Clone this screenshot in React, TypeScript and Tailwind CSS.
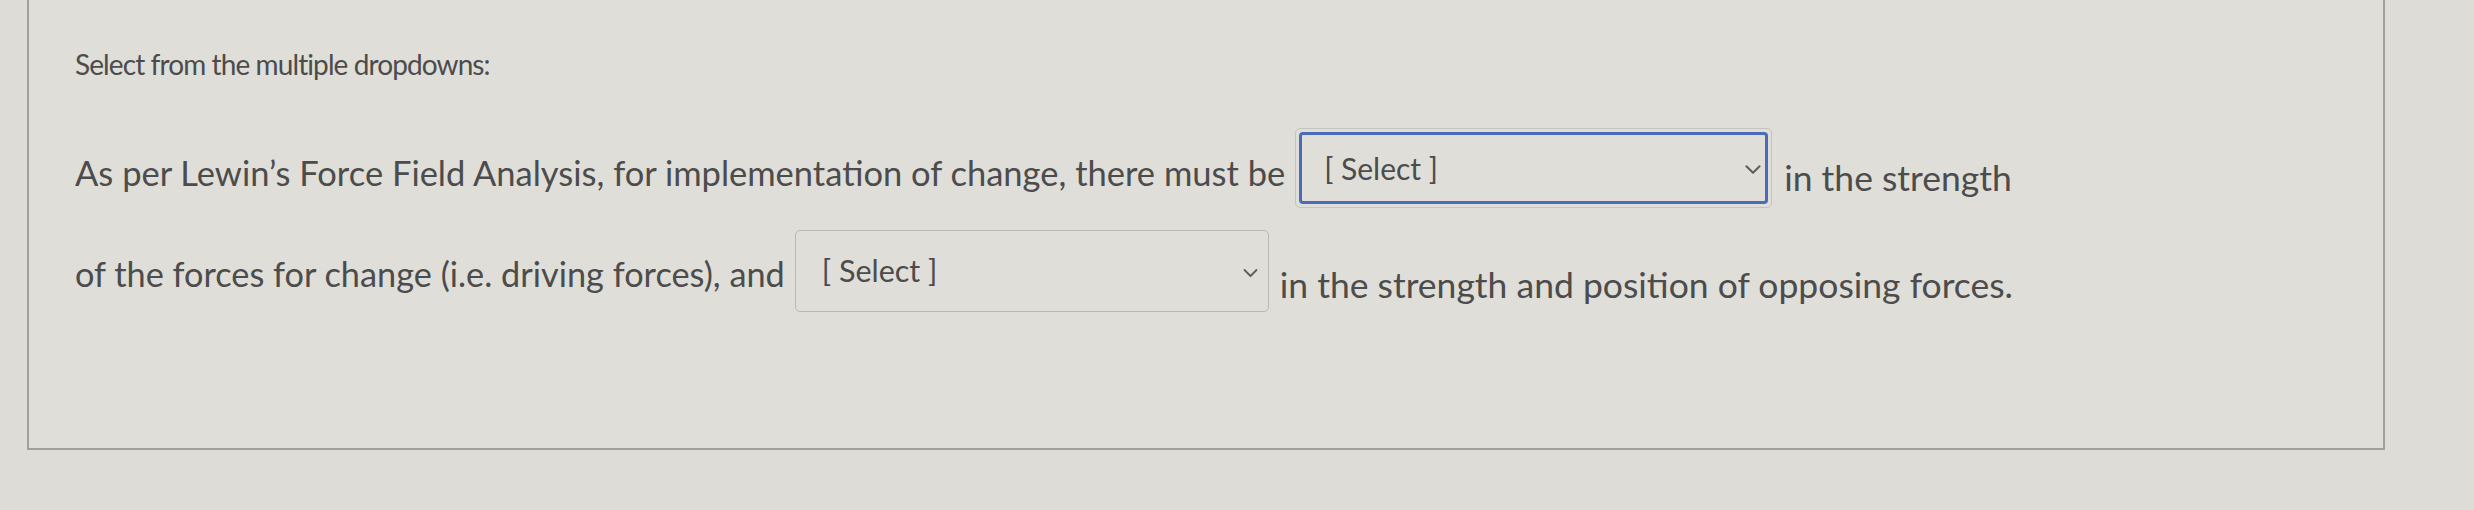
import React from 'react';

const Chevron: React.FC<{ className?: string }> = ({ className }) => (
    <svg viewBox="0 0 16 10" className={className} fill="none" stroke="currentColor" strokeWidth={1.8} strokeLinecap="round" strokeLinejoin="round">
        <path d="M2 2l6 6 6-6" />
    </svg>
);

const App: React.FC = () => {
    return (
        <div className="w-[2474px] h-[510px] overflow-hidden bg-[#dddcd7] text-[#4c4c4c]" style={{ fontFamily: 'Lato, "Open Sans", sans-serif' }}>
            <div className="ml-[27px] w-[2358px] h-[450px] border-x-2 border-b-2 border-[#a0a09c] bg-[#dfded9] pl-[46px]">
                {/* heading */}
                <div className="pt-[46px] h-[90px] text-[28px] leading-[36px] tracking-[-0.9px]">Select from the multiple dropdowns:</div>

                {/* line 1 */}
                <div className="mt-[37px] flex items-center h-[82px] text-[34.5px]">
                    <span className="mt-[10px]">As per Lewin’s Force Field Analysis, for implementation of change, there must be</span>
                    <div className="ml-[10px] w-[477px] h-[80px] shrink-0 rounded-[5px] border border-[#c4c4bf] p-[3px]">
                        <div className="flex h-full items-center justify-between rounded-[4px] border-[3px] border-[#4a6cba] pl-[22px] pr-[3px]">
                            <span className="text-[30px]">[ Select ]</span>
                            <Chevron className="w-[18px] h-[11px] text-[#5d5d5d] mt-[2px]" />
                        </div>
                    </div>
                    <span className="ml-[12px] mt-[20px] text-[35.5px]">in the strength</span>
                </div>

                {/* line 2 */}
                <div className="mt-[20px] flex items-center h-[84px] text-[34.3px]">
                    <span className="mt-[6px]">of the forces for change (i.e. driving forces), and</span>
                    <div className="ml-[10px] flex w-[474px] h-[82px] shrink-0 items-center justify-between rounded-[5px] border border-[#b9b9b4] pl-[26px] pr-[9px]">
                        <span className="text-[30.5px]">[ Select ]</span>
                        <Chevron className="w-[17px] h-[10px] text-[#5d5d5d] mt-[4px]" />
                    </div>
                    <span className="ml-[11px] mt-[28px] text-[35.5px]">in the strength and position of opposing forces.</span>
                </div>
            </div>
        </div>
    );
};

export default App;
